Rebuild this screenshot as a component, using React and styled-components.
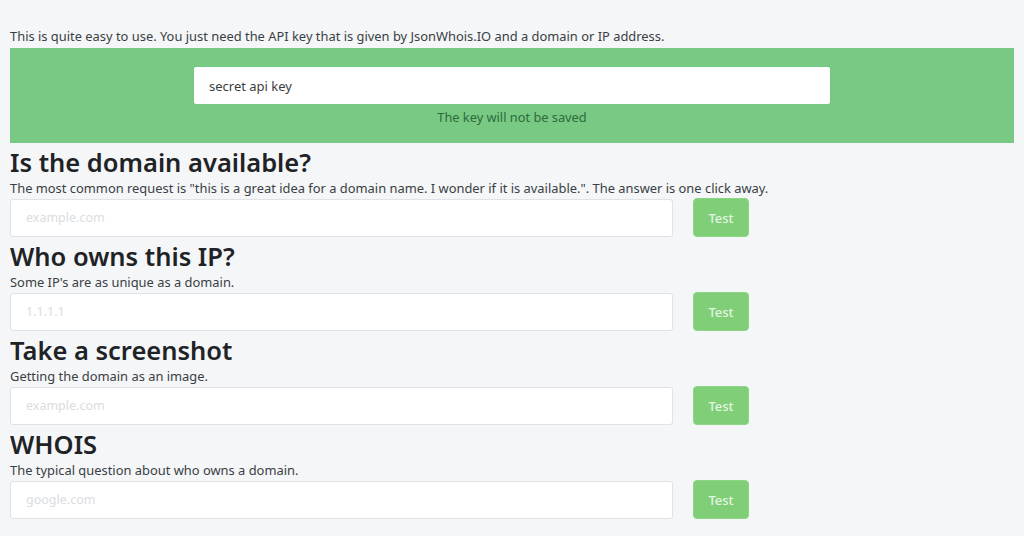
import styled, { createGlobalStyle } from 'styled-components';

const GlobalStyle = createGlobalStyle`
  body {
    margin: 0;
    background: #f4f6f8;
    font-family: 'Noto Sans', 'Open Sans', sans-serif;
    color: #212529;
  }
  * { box-sizing: border-box; }
`;

const Page = styled.main`
  padding: 28px 10px 0;
`;

const Intro = styled.p`
  margin: 0 0 4px;
  font-size: 12.9px;
  line-height: 16px;
  color: #3b3f44;
`;

// Api key band
const KeyBand = styled.section`
  background: #77c983;
  height: 95px;
  padding-top: 19px;
  display: flex;
  flex-direction: column;
  align-items: center;
`;

const KeyInput = styled.input`
  width: 636px;
  height: 37px;
  border: none;
  border-radius: 2px;
  background: #fff;
  padding: 0 15px;
  font-family: inherit;
  font-size: 13px;
  color: #3a3d40;
  outline: none;
`;

const KeyHint = styled.small`
  margin-top: 5px;
  font-size: 12.8px;
  line-height: 16px;
  color: #2f6b3c;
`;

// Sections
const Section = styled.section`
  display: flex;
  flex-direction: column;
`;

const Title = styled.h2`
  margin: 0;
  height: 36px;
  padding-top: 2px;
  font-size: 25.5px;
  line-height: 34px;
  font-weight: 600;
  color: #1f2326;
`;

const Desc = styled.p`
  margin: 0 0 1px;
  height: 18px;
  font-size: 12.9px;
  line-height: 18px;
  color: #3b3f44;
`;

const Row = styled.div`
  display: flex;
  align-items: center;
  gap: 20px;
`;

const Field = styled.input`
  width: 663px;
  height: 38px;
  border: 1px solid #dfe2e6;
  border-radius: 3px;
  background: #fff;
  padding: 0 15px;
  font-family: inherit;
  font-size: 12.5px;
  outline: none;

  &::placeholder {
    color: #dadde1;
  }
`;

const TestButton = styled.button`
  width: 56px;
  height: 39px;
  border: 1px solid #8ad683;
  border-radius: 4px;
  background: #80cf78;
  color: rgba(255, 255, 255, 0.8);
  font-family: inherit;
  font-size: 13px;
  font-weight: 500;
  cursor: pointer;
`;

const CHECKS = [
  {
    title: 'Is the domain available?',
    desc: 'The most common request is "this is a great idea for a domain name. I wonder if it is available.". The answer is one click away.',
    placeholder: 'example.com',
  },
  {
    title: 'Who owns this IP?',
    desc: "Some IP's are as unique as a domain.",
    placeholder: '1.1.1.1',
  },
  {
    title: 'Take a screenshot',
    desc: 'Getting the domain as an image.',
    placeholder: 'example.com',
  },
  {
    title: 'WHOIS',
    desc: 'The typical question about who owns a domain.',
    placeholder: 'google.com',
  },
];

const App = () => (
  <>
    <GlobalStyle />
    <Page>
      <Intro>
        This is quite easy to use. You just need the API key that is given by JsonWhois.IO and a domain or IP address.
      </Intro>
      <KeyBand>
        <KeyInput defaultValue="secret api key" />
        <KeyHint>The key will not be saved</KeyHint>
      </KeyBand>
      {CHECKS.map((check) => (
        <Section key={check.title}>
          <Title>{check.title}</Title>
          <Desc>{check.desc}</Desc>
          <Row>
            <Field placeholder={check.placeholder} />
            <TestButton>Test</TestButton>
          </Row>
        </Section>
      ))}
    </Page>
  </>
);

export default App;
